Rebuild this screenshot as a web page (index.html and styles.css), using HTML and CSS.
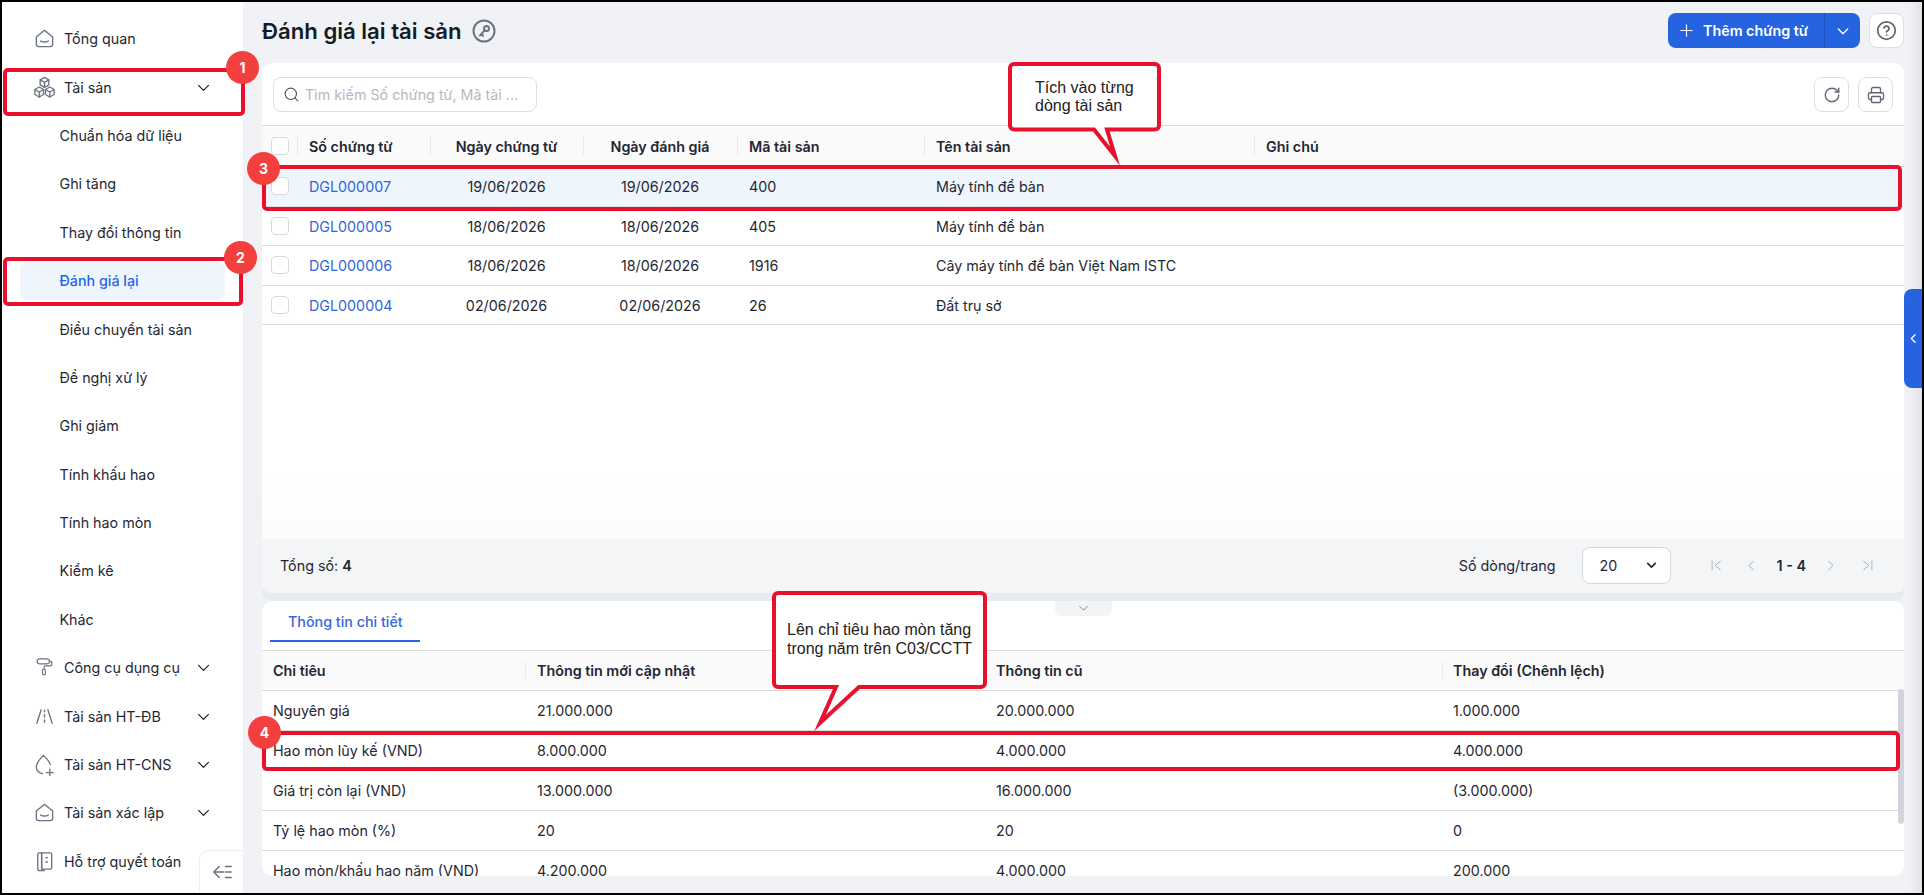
FILE: index.html
```html
<!DOCTYPE html>
<html lang="vi">
<head>
    <meta charset="UTF-8">
    <meta name="viewport" content="width=device-width, initial-scale=1.0">
    <title>Đánh giá lại tài sản</title>
    <link rel="stylesheet" href="styles.css">
</head>
<body>
    <div class="frame">
        <aside class="sidebar">
            <div class="nav-item">
                <svg class="nav-icon" viewBox="0 0 24 24"><path d="M3.5 10.5 12 3.5l8.500 7V18a2.500 2.500 0 0 1-2.500 2.500H6A2.500 2.500 0 0 1 3.500 18z"/><path d="M8 14.500c1.800 1.500 6.200 1.500 8 0"/></svg>
                <span>Tổng quan</span>
            </div>
            <div class="nav-item">
                <svg class="nav-icon" viewBox="0 0 24 24"><path d="M12 1.500l4.500 2.600v5.200L12 11.900 7.500 9.300V4.100z"/><path d="M7.500 4.100 12 6.700l4.500-2.600M12 6.700v5.200"/><path d="M6.500 11.500l4.500 2.600v5.200l-4.500 2.600L2 19.300v-5.200z"/><path d="M2 14.100l4.500 2.600 4.500-2.600M6.500 16.700v5.200"/><path d="M17.500 11.500l4.500 2.600v5.200l-4.500 2.600-4.500-2.600v-5.200z"/><path d="M13 14.100l4.500 2.600 4.500-2.600M17.500 16.700v5.200"/></svg>
                <span>Tài sản</span>
                <svg class="nav-chevron" viewBox="0 0 24 24"><path d="m5 9 7 7 7-7"/></svg>
            </div>
            <div class="nav-item sub">Chuẩn hóa dữ liệu</div>
            <div class="nav-item sub">Ghi tăng</div>
            <div class="nav-item sub">Thay đổi thông tin</div>
            <div class="nav-item sub active"><span class="active-pill">Đánh giá lại</span></div>
            <div class="nav-item sub">Điều chuyển tài sản</div>
            <div class="nav-item sub">Đề nghị xử lý</div>
            <div class="nav-item sub">Ghi giảm</div>
            <div class="nav-item sub">Tính khấu hao</div>
            <div class="nav-item sub">Tính hao mòn</div>
            <div class="nav-item sub">Kiểm kê</div>
            <div class="nav-item sub">Khác</div>
            <div class="nav-item">
                <svg class="nav-icon" viewBox="-2 -1 28 28"><rect x="3" y="2.500" width="15" height="6" rx="3"/><path d="M18 5.500h1.500a1.500 1.500 0 0 1 1.500 1.500v2a2 2 0 0 1-2 2h-5.500a2 2 0 0 0-2 2v1"/><rect x="9.500" y="15" width="3.500" height="7" rx="1.500"/></svg>
                <span>Công cụ dụng cụ</span>
                <svg class="nav-chevron" viewBox="0 0 24 24"><path d="m5 9 7 7 7-7"/></svg>
            </div>
            <div class="nav-item">
                <svg class="nav-icon" viewBox="0 0 24 24"><path d="M8.500 5 4 19M15.500 5 20 19M12 5.500V7M12 10v2.500M12 15.500V18"/></svg>
                <span>Tài sản HT-ĐB</span>
                <svg class="nav-chevron" viewBox="0 0 24 24"><path d="m5 9 7 7 7-7"/></svg>
            </div>
            <div class="nav-item">
                <svg class="nav-icon" viewBox="0 0 24 24"><path d="M10 21.500A7 7 0 0 1 3.500 14c0-3.500 3-7 7.500-11.500 3.500 3.500 6 6.500 7 9.500"/><path d="M14 20.500h7M17.500 17v7"/></svg>
                <span>Tài sản HT-CNS</span>
                <svg class="nav-chevron" viewBox="0 0 24 24"><path d="m5 9 7 7 7-7"/></svg>
            </div>
            <div class="nav-item">
                <svg class="nav-icon" viewBox="0 0 24 24"><path d="M3.500 10.500 12 3.500l8.500 7V18a2.500 2.500 0 0 1-2.500 2.500H6A2.500 2.500 0 0 1 3.500 18z"/><path d="M8 14.500c1.800 1.500 6.200 1.500 8 0"/></svg>
                <span>Tài sản xác lập</span>
                <svg class="nav-chevron" viewBox="0 0 24 24"><path d="m5 9 7 7 7-7"/></svg>
            </div>
            <div class="nav-item">
                <svg class="nav-icon" viewBox="0 0 24 24"><path d="M9 3h9a1.500 1.500 0 0 1 1.500 1.500v14A1.500 1.500 0 0 1 18 20H9z"/><path d="M9 3H6.500A1.500 1.500 0 0 0 5 4.500v15A2 2 0 0 0 7 21.500h5M9 3v17M13.500 8H15M13.500 12.500H15"/></svg>
                <span>Hỗ trợ quyết toán</span>
            </div>
            <div class="collapse-btn">
                <svg viewBox="0 0 24 24"><path d="M9 6 3 12l6 6M3 12h11M16 6h6M16 12h6M16 18h6"/></svg>
            </div>
        </aside>

        <main class="page">
            <header class="page-head">
                <h1>Đánh giá lại tài sản</h1>
                <svg class="key-icon" viewBox="0 0 24 24"><circle cx="12" cy="12" r="10.500"/><circle cx="14.500" cy="9.500" r="2.500"/><path d="m12.700 11.300-4.700 5.200M9.300 15l1.700 1.700"/></svg>
                <div class="add-btn">
                    <div class="add-main">
                        <svg viewBox="0 0 24 24"><path d="M12 4v16M4 12h16"/></svg>
                        <span>Thêm chứng từ</span>
                    </div>
                    <div class="add-more">
                        <svg viewBox="0 0 24 24"><path d="m5 9 7 7 7-7"/></svg>
                    </div>
                </div>
                <div class="square-btn">
                    <svg viewBox="0 0 24 24"><circle cx="12" cy="12" r="10"/><path d="M9.100 9a3 3 0 0 1 5.800 1c0 2-3 2.600-3 3.500M12 17.200h.01"/></svg>
                </div>
            </header>

            <section class="panel list-panel">
                <div class="toolbar">
                    <div class="search-box">
                        <svg viewBox="0 0 24 24"><circle cx="11" cy="11" r="8"/><path d="m21 21-4.300-4.300"/></svg>
                        <span>Tìm kiếm Số chứng từ, Mã tài ...</span>
                    </div>
                    <div class="toolbar-right">
                        <div class="square-btn">
                            <svg viewBox="0 0 24 24"><path d="M21 12a9 9 0 1 1-9-9c2.500 0 4.900 1 6.700 2.700L21 8"/><path d="M21 3v5h-5"/></svg>
                        </div>
                        <div class="square-btn">
                            <svg viewBox="0 0 24 24"><path d="M6 9V4a2 2 0 0 1 2-2h8a2 2 0 0 1 2 2v5"/><path d="M6 18H4a2 2 0 0 1-2-2v-5a2 2 0 0 1 2-2h16a2 2 0 0 1 2 2v5a2 2 0 0 1-2 2h-2"/><rect x="6" y="14" width="12" height="8" rx="1"/></svg>
                        </div>
                    </div>
                </div>

                <div class="doc-row doc-head">
                    <div class="cell-check"><span class="checkbox"></span></div>
                    <div class="cell sep">Số chứng từ</div>
                    <div class="cell sep center">Ngày chứng từ</div>
                    <div class="cell sep center">Ngày đánh giá</div>
                    <div class="cell sep">Mã tài sản</div>
                    <div class="cell sep">Tên tài sản</div>
                    <div class="cell sep">Ghi chú</div>
                </div>
                <div class="doc-row selected">
                    <div class="cell-check"><span class="checkbox"></span></div>
                    <div class="cell link">DGL000007</div>
                    <div class="cell center">19/06/2026</div>
                    <div class="cell center">19/06/2026</div>
                    <div class="cell">400</div>
                    <div class="cell">Máy tính để bàn</div>
                    <div class="cell"></div>
                </div>
                <div class="doc-row">
                    <div class="cell-check"><span class="checkbox"></span></div>
                    <div class="cell link">DGL000005</div>
                    <div class="cell center">18/06/2026</div>
                    <div class="cell center">18/06/2026</div>
                    <div class="cell">405</div>
                    <div class="cell">Máy tính để bàn</div>
                    <div class="cell"></div>
                </div>
                <div class="doc-row">
                    <div class="cell-check"><span class="checkbox"></span></div>
                    <div class="cell link">DGL000006</div>
                    <div class="cell center">18/06/2026</div>
                    <div class="cell center">18/06/2026</div>
                    <div class="cell">1916</div>
                    <div class="cell">Cây máy tính để bàn Việt Nam ISTC</div>
                    <div class="cell"></div>
                </div>
                <div class="doc-row">
                    <div class="cell-check"><span class="checkbox"></span></div>
                    <div class="cell link">DGL000004</div>
                    <div class="cell center">02/06/2026</div>
                    <div class="cell center">02/06/2026</div>
                    <div class="cell">26</div>
                    <div class="cell">Đất trụ sở</div>
                    <div class="cell"></div>
                </div>
                <div class="doc-empty"></div>

                <footer class="pager">
                    <div class="total">Tổng số: <b>4</b></div>
                    <div class="pager-right">
                        <span>Số dòng/trang</span>
                        <div class="size-select">
                            <span>20</span>
                            <svg viewBox="0 0 24 24"><path d="m5 8 7 7 7-7"/></svg>
                        </div>
                        <div class="pager-nav">
                            <svg viewBox="0 0 24 24"><path d="M5 5v14M18 5l-8 7 8 7"/></svg>
                            <svg viewBox="0 0 24 24"><path d="m15 5-7 7 7 7"/></svg>
                            <b>1 - 4</b>
                            <svg viewBox="0 0 24 24"><path d="m9 5 7 7-7 7"/></svg>
                            <svg viewBox="0 0 24 24"><path d="M19 5v14M6 5l8 7-8 7"/></svg>
                        </div>
                    </div>
                </footer>
            </section>

            <section class="panel detail-panel">
                <div class="split-handle">
                    <svg viewBox="0 0 24 24"><path d="m5 8 7 7 7-7"/></svg>
                </div>
                <div class="tabs">
                    <div class="tab">Thông tin chi tiết</div>
                </div>
                <div class="info-row info-head">
                    <div class="cell">Chỉ tiêu</div>
                    <div class="cell sep">Thông tin mới cập nhật</div>
                    <div class="cell sep">Thông tin cũ</div>
                    <div class="cell sep">Thay đổi (Chênh lệch)</div>
                </div>
                <div class="info-row">
                    <div class="cell">Nguyên giá</div>
                    <div class="cell">21.000.000</div>
                    <div class="cell">20.000.000</div>
                    <div class="cell">1.000.000</div>
                </div>
                <div class="info-row">
                    <div class="cell">Hao mòn lũy kế (VND)</div>
                    <div class="cell">8.000.000</div>
                    <div class="cell">4.000.000</div>
                    <div class="cell">4.000.000</div>
                </div>
                <div class="info-row">
                    <div class="cell">Giá trị còn lại (VND)</div>
                    <div class="cell">13.000.000</div>
                    <div class="cell">16.000.000</div>
                    <div class="cell">(3.000.000)</div>
                </div>
                <div class="info-row">
                    <div class="cell">Tỷ lệ hao mòn (%)</div>
                    <div class="cell">20</div>
                    <div class="cell">20</div>
                    <div class="cell">0</div>
                </div>
                <div class="info-row">
                    <div class="cell">Hao mòn/khấu hao năm (VND)</div>
                    <div class="cell">4.200.000</div>
                    <div class="cell">4.000.000</div>
                    <div class="cell">200.000</div>
                </div>
                <div class="scroll-thumb"></div>
            </section>
        </main>

        <div class="side-tab">
            <svg viewBox="0 0 24 24"><path d="m15 5-7 7 7 7"/></svg>
        </div>
    </div>

    <!-- red notes drawn on top of the screenshot -->
    <div class="mark mark-menu"></div>
    <div class="mark mark-active"></div>
    <div class="mark mark-row"></div>
    <div class="mark mark-info"></div>

    <svg class="callouts" viewBox="0 0 1924 895">
        <path d="M1014 64H1155a4 4 0 0 1 4 4V125.500a4 4 0 0 1-4 4H1107L1115 156 1094 129.500H1014a4 4 0 0 1-4-4V68a4 4 0 0 1 4-4z"/>
        <path d="M778 593H981a4 4 0 0 1 4 4V683a4 4 0 0 1-4 4H859L820 723 836 687H778a4 4 0 0 1-4-4V597a4 4 0 0 1 4-4z"/>
    </svg>
    <div class="note note-row">Tích vào từng<br>dòng tài sản</div>
    <div class="note note-info">Lên chỉ tiêu hao mòn tăng<br>trong năm trên C03/CCTT</div>

    <div class="step step-1">1</div>
    <div class="step step-2">2</div>
    <div class="step step-3">3</div>
    <div class="step step-4">4</div>
</body>
</html>
```

FILE: styles.css
```css
* {
    margin: 0;
    padding: 0;
    box-sizing: border-box;
}

body {
    width: 1924px;
    height: 895px;
    overflow: hidden;
    position: relative;
    font-family: Inter, "Noto Sans", sans-serif;
    font-size: 14.3px;
    color: #1f2733;
    background: #000;
}

svg {
    fill: none;
    stroke: currentColor;
    stroke-width: 1.6;
    stroke-linecap: round;
    stroke-linejoin: round;
    flex-shrink: 0;
}

.frame {
    display: flex;
    height: 891px;
    margin: 2px;
    position: relative;
    background: #f0f2f5;
}

/* sidebar */
.sidebar {
    width: 241px;
    padding-top: 12.500px;
    background: white;
    position: relative;
    flex-shrink: 0;
}

.nav-item {
    display: flex;
    align-items: center;
    height: 48.4px;
    padding-left: 30.500px;
    white-space: nowrap;
    color: #1f2733;
}

.nav-item.sub {
    padding-left: 57.500px;
}

.nav-icon {
    width: 23px;
    height: 23px;
    margin-right: 8.500px;
    color: #6b7280;
    stroke-width: 1.4;
}

.nav-chevron {
    width: 17px;
    height: 17px;
    position: absolute;
    left: 192.500px;
    stroke-width: 1.8;
}

.nav-item.active {
    padding-left: 18px;
}

.active-pill {
    width: 205px;
    height: 38px;
    line-height: 38px;
    padding-left: 39.500px;
    border-radius: 8px;
    background: #eef5fd;
    color: #2563eb;
    font-weight: 500;
}

.collapse-btn {
    position: absolute;
    right: 0;
    bottom: 0;
    width: 44px;
    height: 43px;
    display: flex;
    align-items: center;
    justify-content: center;
    background: #fff;
    border: 1px solid #eceef1;
    border-width: 1px 0 0 1px;
    border-top-left-radius: 10px;
    color: #6b7280;
}

.collapse-btn svg {
    width: 22px;
    height: 22px;
}

/* main area */
.page {
    flex: 1;
    min-width: 0;
    padding: 0 18px 17px 19px;
    display: flex;
    flex-direction: column;
    box-shadow: inset -14px 0 10px -8px #dfe1e4;
}

.page-head {
    height: 61px;
    display: flex;
    align-items: center;
    padding-bottom: 4px;
}

.page-head h1 {
    font-size: 22.150px;
    font-weight: 600;
    color: #141b26;
}

.key-icon {
    width: 24px;
    height: 24px;
    margin-left: 10px;
    color: #6b7280;
    stroke-width: 2;
}

.add-btn {
    display: flex;
    height: 35px;
    margin-left: auto;
    border-radius: 8px;
    background: #2563e0;
    color: white;
}

.add-main {
    width: 156px;
    display: flex;
    align-items: center;
    font-weight: 600;
    padding-left: 10px;
}

.add-main svg {
    width: 17px;
    height: 17px;
    margin-right: 8px;
}

.add-more {
    width: 36px;
    display: flex;
    align-items: center;
    justify-content: center;
    border-left: 1px solid #1d4fb8;
}

.add-more svg {
    width: 16px;
    height: 16px;
    stroke-width: 2;
}

.square-btn {
    width: 35px;
    height: 35px;
    display: flex;
    align-items: center;
    justify-content: center;
    background: white;
    border: 1px solid #dcdfe3;
    border-radius: 8px;
    color: #5f6773;
}

.square-btn svg {
    width: 18px;
    height: 18px;
    stroke-width: 1.800;
}

.page-head .square-btn {
    margin-left: 9px;
}

.page-head .square-btn svg {
    width: 21px;
    height: 21px;
    stroke-width: 2;
}

.panel {
    background: white;
    position: relative;
}

.list-panel {
    height: 530px;
    display: flex;
    flex-direction: column;
    border-radius: 10px;
    overflow: hidden;
    box-shadow: 0 8px 0 #e9ecef;
}

.toolbar {
    height: 63px;
    flex-shrink: 0;
    padding: 14px 11px 0;
    display: flex;
    justify-content: space-between;
    border-bottom: 1px solid #dcdcdc;
}

.search-box {
    width: 264px;
    height: 35px;
    display: flex;
    align-items: center;
    padding-left: 9px;
    border: 1px solid #dcdfe3;
    border-radius: 8px;
    color: #b4b9c1;
}

.search-box svg {
    width: 17px;
    height: 17px;
    margin-right: 5px;
    color: #4b5563;
}

.toolbar-right {
    display: flex;
    gap: 9px;
}

.doc-row {
    display: grid;
    grid-template-columns: 35px 133px 153px 154px 187px 330px 1fr;
    align-items: center;
    height: 39.500px;
    flex-shrink: 0;
    border-bottom: 1px solid #dcdcdc;
}

.doc-row .cell {
    padding-top: 1.400px;
    padding-left: 12px;
    white-space: nowrap;
}

.doc-row .cell.center {
    padding-left: 0;
    text-align: center;
}

.doc-head {
    height: 41px;
    background: #fafafa;
    font-weight: 600;
}

.selected {
    background: #eef5fd;
}

.sep {
    position: relative;
}

.sep::before {
    content: "";
    position: absolute;
    left: 0;
    top: 0;
    width: 1px;
    height: 17px;
    background: #e6e7e9;
}

.cell-check {
    display: flex;
    justify-content: center;
}

.checkbox {
    width: 18px;
    height: 18px;
    background: white;
    border: 1px solid #d9d9d9;
    border-radius: 4px;
}

.link {
    color: #2f66d8;
}

.doc-empty {
    flex: 1;
    background: linear-gradient(#fff 70%, #fbfcfc);
}

.pager {
    height: 54px;
    flex-shrink: 0;
    display: flex;
    align-items: center;
    justify-content: space-between;
    padding: 0 29px 2px 18px;
    background: #f3f5f7;
}

.total b {
    font-weight: 600;
}

.pager-right {
    display: flex;
    align-items: center;
}

.size-select {
    width: 89px;
    height: 37px;
    margin-left: 26px;
    display: flex;
    align-items: center;
    justify-content: space-between;
    padding: 0 12px 0 17px;
    background: white;
    border: 1px solid #d5d8dc;
    border-radius: 8px;
}

.size-select svg {
    width: 13px;
    height: 13px;
    stroke-width: 3;
}

.pager-nav {
    display: flex;
    align-items: center;
    margin-left: 38px;
    color: #a9aeb6;
}

.pager-nav svg {
    width: 15px;
    height: 15px;
}

.pager-nav svg:first-child {
    margin-right: 20px;
}

.pager-nav svg:last-child {
    margin-left: 22px;
}

.pager-nav b {
    margin: 0 17px 0 18px;
    color: #1f2733;
    font-weight: 600;
}

.detail-panel {
    margin-top: 8px;
    height: 275px;
    overflow: hidden;
    border-radius: 10px;
}

.split-handle {
    position: absolute;
    left: 793px;
    top: 0;
    width: 57px;
    height: 15px;
    display: flex;
    align-items: center;
    justify-content: center;
    background: #f3f4f6;
    border-radius: 0 0 6px 6px;
    color: #6b7280;
}

.split-handle svg {
    width: 13px;
    height: 13px;
}

.tabs {
    height: 50px;
    padding-left: 8px;
    border-bottom: 1px solid #dcdcdc;
}

.tab {
    width: 150px;
    height: 41px;
    padding: 12px 0 0 18px;
    color: #3568e0;
    font-weight: 500;
    border-bottom: 2px solid #2563e0;
}

.info-row {
    display: grid;
    grid-template-columns: 263px 459px 458px 1fr;
    align-items: center;
    height: 40px;
    border-bottom: 1px solid #dcdcdc;
}

.info-row .cell {
    padding-left: 11px;
    white-space: nowrap;
}

.info-row .cell:nth-child(n+2) {
    padding-left: 12px;
}

.info-row .cell:last-child {
    padding-left: 11px;
}

.info-head {
    height: 40px;
    background: #fafafa;
    font-weight: 600;
}

.scroll-thumb {
    position: absolute;
    right: 0;
    top: 88px;
    width: 6px;
    height: 135px;
    border-radius: 3px;
    background: #d1d5db;
}

.side-tab {
    position: absolute;
    right: 0;
    top: 287px;
    width: 18px;
    height: 99px;
    display: flex;
    align-items: center;
    justify-content: center;
    background: #2563e0;
    border-radius: 8px 0 0 8px;
    color: white;
}

.side-tab svg {
    width: 13px;
    height: 13px;
    stroke-width: 2.400;
}

/* annotations */
.mark {
    position: absolute;
    border: 4px solid #e8112d;
    border-radius: 5px;
}

.mark-menu {
    left: 3px;
    top: 68px;
    width: 242px;
    height: 48px;
}

.mark-active {
    left: 3px;
    top: 257px;
    width: 240px;
    height: 49px;
}

.mark-row {
    left: 262px;
    top: 165px;
    width: 1640px;
    height: 46px;
}

.mark-info {
    left: 262px;
    top: 731px;
    width: 1638px;
    height: 40px;
}

.callouts {
    position: absolute;
    left: 0;
    top: 0;
    width: 1924px;
    height: 895px;
    fill: white;
    stroke: #e8112d;
    stroke-width: 4;
    stroke-linecap: butt;
    stroke-linejoin: miter;
    stroke-miterlimit: 10;
}

.note {
    position: absolute;
    font-family: "Liberation Sans", Arial, sans-serif;
    font-size: 16px;
    color: #222;
    white-space: nowrap;
}

.note-row {
    left: 1035px;
    top: 79px;
    line-height: 18px;
}

.note-info {
    left: 787px;
    top: 621px;
    line-height: 18.700px;
}

.step {
    position: absolute;
    width: 33px;
    height: 33px;
    border-radius: 50%;
    background: #f43f3f;
    color: white;
    font-weight: 700;
    font-size: 14px;
    line-height: 33px;
    text-align: center;
}

.step-1 {
    left: 226px;
    top: 51px;
}

.step-2 {
    left: 224px;
    top: 241px;
}

.step-3 {
    left: 247px;
    top: 152px;
}

.step-4 {
    left: 248px;
    top: 716px;
}
```
